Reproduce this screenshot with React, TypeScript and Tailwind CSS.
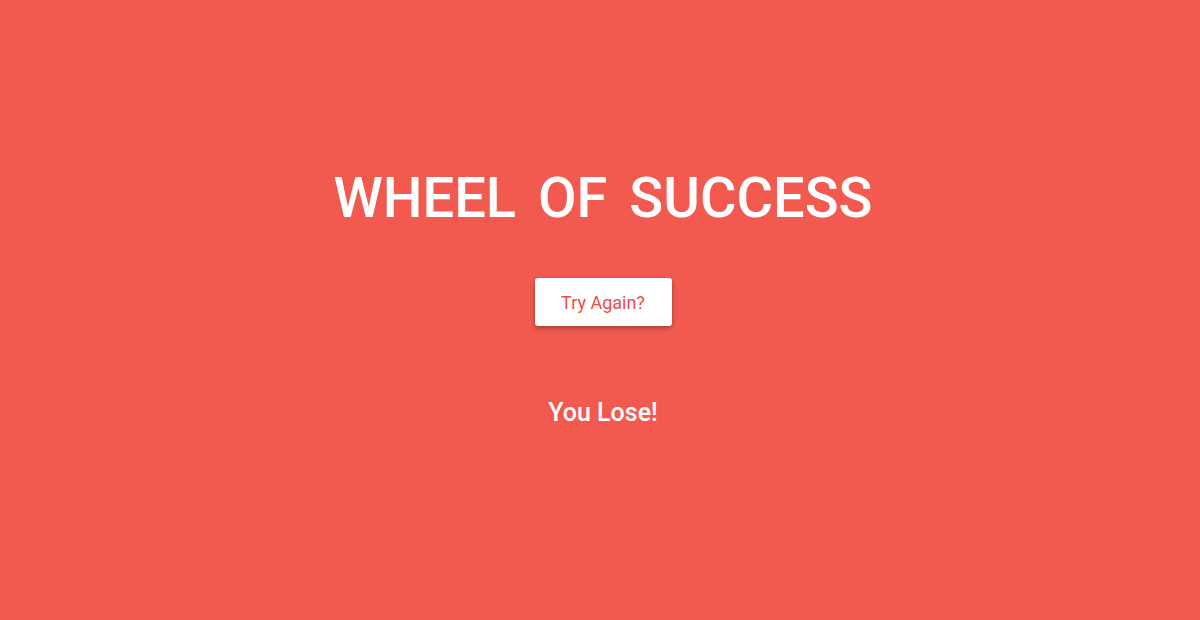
export default function App() {
  return (
    <div className="h-[620px] w-full bg-[#f25a4f] flex flex-col items-center pl-[6px] font-['Roboto',sans-serif] text-white">
      <h1 className="mt-[166px] text-[56px] font-medium tracking-[0px] [word-spacing:8px] leading-[64px]">
        WHEEL OF SUCCESS
      </h1>
      <button className="mt-[48px] w-[137px] h-[48px] rounded-[3px] bg-white text-[18px] text-[#f04c42] shadow-[0_2px_5px_rgba(0,0,0,0.35)]">
        Try Again?
      </button>
      <p className="mt-[71px] text-[25px] font-medium leading-[32px]">You Lose!</p>
    </div>
  );
}
